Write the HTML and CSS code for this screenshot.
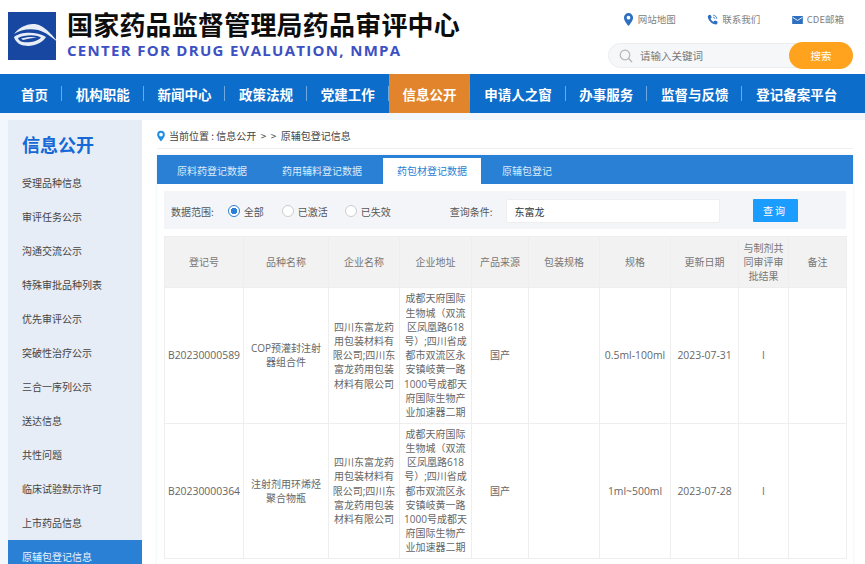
FILE: index.html
```html
<!DOCTYPE html>
<html lang="zh-CN">
<head>
<meta charset="utf-8">
<title>信息公开</title>
<link rel="stylesheet" href="styles.css">
</head>
<body>
<header class="top">
  <div class="brand">
    <svg class="logo" viewBox="0 0 52 48" aria-hidden="true">
      <rect width="48" height="48" fill="#1747a0"/>
      <path d="M6 22C12 14 24 9 33 14c6 3 12 10 17 16-6-4-12-10-20-12-9-2-18 0-24 4z" fill="#e8eef8"/>
      <path d="M6 25c6-5 22-6 32 0-4 7-14 10-22 8.500C11 33 7 29 6 25z" fill="#e8eef8"/>
      <path d="M10 26c6-3 17-4 23-.5-4 4.500-13 5.500-18 4.500-3-.5-4.500-2-5-4z" fill="#1747a0"/>
      <path d="M13 26.500c5-1.500 11-2 16-1-5 .5-10 1.500-14 2.500z" fill="#e8eef8"/>
    </svg>
    <div class="brand-text">
      <div class="brand-cn">国家药品监督管理局药品审评中心</div>
      <div class="brand-en">CENTER FOR DRUG EVALUATION, NMPA</div>
    </div>
  </div>
  <div class="tools">
    <div class="links">
      <a class="link"><svg class="ico" viewBox="0 0 12 14"><path d="M6 0a5 5 0 0 0-5 5c0 3.500 5 9 5 9s5-5.500 5-9a5 5 0 0 0-5-5zm0 7a2 2 0 1 1 0-4 2 2 0 0 1 0 4z" fill="#2f6fc0"/></svg>网站地图</a>
      <a class="link"><svg class="ico" viewBox="0 0 14 14"><path d="M3 1l2 .5 1 3-1.500 1.500c.8 1.800 2 3 3.800 3.800L10 8.300l3 1 .5 2-1.500 2C6.500 13.500.8 8 1 2.500z" fill="#2f6fc0"/><path d="M8 1.500c2.500.2 4.300 2 4.500 4.500M8 4c1 .1 1.900 1 2 2" fill="none" stroke="#2f6fc0" stroke-width="1.200"/></svg>联系我们</a>
      <a class="link"><svg class="ico ico-mail" viewBox="0 0 12 9"><rect width="12" height="9" fill="#2f6fc0"/><path d="M.5 1.500 6 5l5.500-3.500" fill="none" stroke="#fff" stroke-width="1"/></svg>CDE邮箱</a>
    </div>
    <div class="search">
      <svg class="search-ico" viewBox="0 0 14 14"><circle cx="6" cy="6" r="4.800" fill="none" stroke="#b5b5b5" stroke-width="1.200"/><path d="M9.600 9.600 13 13" stroke="#b5b5b5" stroke-width="1.400"/></svg>
      <span class="search-text">请输入关键词</span>
      <button class="search-btn">搜索</button>
    </div>
  </div>
</header>

<nav class="nav">
  <a class="nav-item">首页</a>
  <a class="nav-item">机构职能</a>
  <a class="nav-item">新闻中心</a>
  <a class="nav-item">政策法规</a>
  <a class="nav-item">党建工作</a>
  <a class="nav-item is-active">信息公开</a>
  <a class="nav-item">申请人之窗</a>
  <a class="nav-item">办事服务</a>
  <a class="nav-item">监督与反馈</a>
  <a class="nav-item nav-last">登记备案平台</a>
</nav>

<div class="page">
  <aside class="side">
    <h2 class="side-title">信息公开</h2>
    <a class="side-item">受理品种信息</a>
    <a class="side-item">审评任务公示</a>
    <a class="side-item">沟通交流公示</a>
    <a class="side-item">特殊审批品种列表</a>
    <a class="side-item">优先审评公示</a>
    <a class="side-item">突破性治疗公示</a>
    <a class="side-item">三合一序列公示</a>
    <a class="side-item">送达信息</a>
    <a class="side-item">共性问题</a>
    <a class="side-item">临床试验默示许可</a>
    <a class="side-item">上市药品信息</a>
    <a class="side-item is-active">原辅包登记信息</a>
  </aside>
  <main class="main">
    <div class="crumb">
      <svg class="crumb-ico" viewBox="0 0 10 13"><path d="M5 0a4.800 4.800 0 0 0-4.800 4.800C.2 8 5 13 5 13s4.800-5 4.800-8.200A4.800 4.800 0 0 0 5 0zm0 7a2.300 2.300 0 1 1 0-4.600A2.300 2.300 0 0 1 5 7z" fill="#1f8fe6"/></svg>
      <span>当前位置 : 信息公开 &nbsp;&gt; &nbsp;&gt; &nbsp;原辅包登记信息</span>
    </div>
    <div class="panel">
      <div class="tabs">
        <a class="tab">原料药登记数据</a>
        <a class="tab">药用辅料登记数据</a>
        <a class="tab is-active">药包材登记数据</a>
        <a class="tab">原辅包登记</a>
      </div>
      <div class="filter">
        <span class="f-label">数据范围:</span>
        <label class="radio is-on"><i class="dot"></i>全部</label>
        <label class="radio"><i class="dot"></i>已激活</label>
        <label class="radio"><i class="dot"></i>已失效</label>
        <span class="f-label f-query">查询条件:</span>
        <div class="f-input">东富龙</div>
        <button class="f-btn">查询</button>
      </div>
      <table class="grid">
        <colgroup>
          <col class="c1"><col class="c2"><col class="c3"><col class="c4"><col class="c5">
          <col class="c6"><col class="c7"><col class="c8"><col class="c9"><col class="c10">
        </colgroup>
        <thead>
          <tr>
            <th>登记号</th><th>品种名称</th><th>企业名称</th><th>企业地址</th><th>产品来源</th>
            <th>包装规格</th><th>规格</th><th>更新日期</th><th>与制剂共同审评审批结果</th><th>备注</th>
          </tr>
        </thead>
        <tbody>
          <tr>
            <td class="num">B20230000589</td>
            <td>COP预灌封注射器组合件</td>
            <td>四川东富龙药用包装材料有限公司;四川东富龙药用包装材料有限公司</td>
            <td>成都天府国际生物城（双流区凤凰路618号）;四川省成都市双流区永安镇岐黄一路1000号成都天府国际生物产业加速器二期</td>
            <td>国产</td><td></td><td class="num">0.5ml-100ml</td><td class="num">2023-07-31</td><td>I</td><td></td>
          </tr>
          <tr>
            <td class="num">B20230000364</td>
            <td>注射剂用环烯烃聚合物瓶</td>
            <td>四川东富龙药用包装材料有限公司;四川东富龙药用包装材料有限公司</td>
            <td>成都天府国际生物城（双流区凤凰路618号）;四川省成都市双流区永安镇岐黄一路1000号成都天府国际生物产业加速器二期</td>
            <td>国产</td><td></td><td class="num">1ml~500ml</td><td class="num">2023-07-28</td><td>I</td><td></td>
          </tr>
        </tbody>
      </table>
    </div>
  </main>
</div>
</body>
</html>
```
FILE: styles.css
```css
* { box-sizing: border-box; }
html, body { margin: 0; height: 100%; overflow: hidden; }
body {
  background: #f2f7fe;
  font-family: "Noto Sans CJK SC", "Microsoft YaHei", sans-serif;
  font-size: 10px;
  color: #666;
}
a { color: inherit; text-decoration: none; }

.top {
  height: 74px;
  background: #fff;
  display: flex;
  justify-content: space-between;
  padding: 12px 12px 0 8px;
}
.brand { display: flex; gap: 7px; align-items: flex-start; }
.logo { width: 52px; height: 48px; display: block; }
.brand-text { display: flex; flex-direction: column; margin-top: -1px; }
.brand-cn {
  font-size: 26px;
  font-weight: 700;
  line-height: 26px;
  letter-spacing: 0.200px;
  color: #0d0d0d;
}
.brand-en {
  font-family: "Open Sans", "Liberation Sans", sans-serif;
  font-size: 15px;
  font-weight: 700;
  line-height: 18px;
  margin-top: 4px;
  letter-spacing: 1.300px;
  color: #3d50c4;
  white-space: nowrap;
}
.tools { width: 245px; display: flex; flex-direction: column; }
.links { display: flex; justify-content: flex-end; gap: 31.500px; padding-right: 9px; height: 31px; }
.link { display: flex; align-items: center; gap: 4px; height: 14px; font-size: 9.500px; color: #808080; white-space: nowrap; }
.ico { width: 11px; height: 13px; }
.ico-mail { height: 8px; margin-top: 2px; }
.search {
  position: relative;
  height: 25px;
  background: #f6f7f9;
  border: 1px solid #ebedf0;
  border-radius: 13px;
  display: flex;
  align-items: center;
  padding-left: 10px;
}
.search-ico { width: 14px; height: 14px; }
.search-text { margin-left: 7px; font-size: 10.500px; color: #777; }
.search-btn {
  position: absolute;
  right: -1px;
  top: -2px;
  width: 64px;
  height: 27px;
  border: 0;
  border-radius: 14px;
  background: #ffa31f;
  color: #fff;
  font: inherit;
  font-size: 10.500px;
}

.nav {
  height: 39px;
  background: #0c6dcb;
  display: flex;
  align-items: stretch;
  padding-left: 7.200px;
}
.nav-item {
  position: relative;
  display: flex;
  align-items: center;
  padding: 0 13.850px;
  font-size: 13.500px;
  font-weight: 700;
  color: #fff;
  white-space: nowrap;
}
.nav-item::after {
  content: "";
  position: absolute;
  right: 0;
  top: 12px;
  height: 15px;
  width: 1px;
  background: #6ea9e0;
}
.nav-last::after { display: none; }
.nav-item.is-active { background: #e2842b; }

.page { display: flex; padding: 7px 0 0 8px; height: 451px; }
.side { width: 134px; background: #e6edf6; flex: none; overflow: hidden; }
.side-title {
  margin: 0;
  padding: 13px 0 0 14px;
  height: 46px;
  font-size: 18px;
  font-weight: 700;
  line-height: 22px;
  color: #1669d6;
}
.side-item {
  display: block;
  height: 34px;
  line-height: 33px;
  padding-left: 14px;
  color: #444;
}
.side-item.is-active { background: #2a80d5; color: #eaf3ff; }

.main { flex: 1; background: #fff; padding: 0 12px 0 15px; min-width: 0; }
.crumb {
  height: 29px;
  display: flex;
  align-items: center;
  gap: 4px;
  border-bottom: 1px solid #f0f0f0;
  padding-top: 3px;
  color: #444;
}
.crumb-ico { width: 8px; height: 12px; }
.panel { margin-top: 6px; background: #fff; box-shadow: 0 0 3px #e8eef8; height: 420px; }
.tabs { height: 29px; background: #2a80d5; display: flex; gap: 7px; padding: 3px 0 0 6px; }
.tab { padding: 0 14px; line-height: 26px; color: #dcebfb; white-space: nowrap; }
.tab.is-active { background: #fff; color: #2a80d5; }

.filter {
  margin: 7px 7px 0;
  height: 38px;
  background: #f4f5f9;
  display: flex;
  align-items: center;
  padding: 2px 0 0 7px;
  color: #555;
}
.radio { display: flex; align-items: center; gap: 4px; }
.dot {
  width: 12px;
  height: 12px;
  border-radius: 50%;
  border: 1px solid #ccc;
  background: #fff;
}
.radio.is-on .dot {
  border-color: #2a80d5;
  background: radial-gradient(circle, #2a80d5 0 3px, #fff 3.500px);
}
.f-label { white-space: nowrap; }
.f-label + .radio { margin-left: 14px; }
.radio + .radio { margin-left: 18px; }
.radio + .radio + .radio { margin-left: 17px; }
.f-query { margin-left: 59px; }
.f-input {
  margin-left: 13px;
  width: 214px;
  height: 24px;
  line-height: 24px;
  background: #fff;
  border: 1px solid #eee;
  border-radius: 2px;
  padding-left: 8px;
  color: #333;
}
.f-btn {
  margin: -2px 0 0 33px;
  width: 45px;
  height: 23px;
  border: 0;
  border-radius: 1px;
  background: #1a9dff;
  color: #fff;
  font: inherit;
  letter-spacing: 2px;
}

.grid {
  margin: 7px 7px 0;
  width: 682px;
  table-layout: fixed;
  border-collapse: collapse;
  line-height: 14.200px;
}
.c1 { width: 79px; } .c2 { width: 85px; } .c3 { width: 71px; } .c4 { width: 72px; } .c5 { width: 57px; }
.c6 { width: 71px; } .c7 { width: 71px; } .c8 { width: 68px; } .c9 { width: 50px; } .c10 { width: 58px; }
.grid th, .grid td {
  border: 1px solid #eee;
  padding: 0 3px;
  text-align: center;
  font-weight: 400;
  color: #777;
  word-break: break-all;
}
.grid th { height: 51px; background: #f2f2f2; }
.grid td {
  height: 135.500px;
  font-family: "Open Sans", "Noto Sans CJK SC", sans-serif;
  color: #666;
}
.grid td.num { font-size: 10.400px; padding: 0; white-space: nowrap; }
```
